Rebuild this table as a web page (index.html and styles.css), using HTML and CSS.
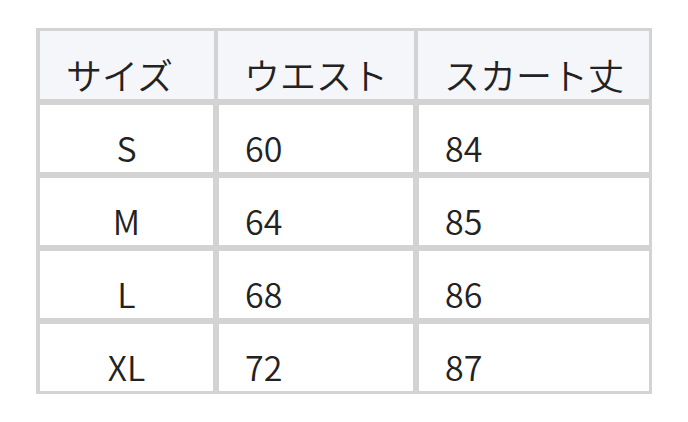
FILE: index.html
```html
<!DOCTYPE html>
<html lang="ja">
<head>
<meta charset="utf-8">
<link rel="stylesheet" href="styles.css">
</head>
<body>
<div class="table">
  <div class="th">サイズ</div>
  <div class="th">ウエスト</div>
  <div class="th">スカート丈</div>
  <div class="td center">S</div>
  <div class="td">60</div>
  <div class="td">84</div>
  <div class="td center">M</div>
  <div class="td">64</div>
  <div class="td">85</div>
  <div class="td center">L</div>
  <div class="td">68</div>
  <div class="td">86</div>
  <div class="td center">XL</div>
  <div class="td">72</div>
  <div class="td">87</div>
</div>
</body>
</html>
```
FILE: styles.css
```css
html, body {
  margin: 0;
  padding: 0;
  background: #ffffff;
}
body {
  padding: 28px 0 0 36px;
  font-family: "Noto Sans CJK JP", "Noto Sans", sans-serif;
  font-weight: 350;
  color: #222222;
}
.table {
  display: inline-grid;
  grid-template-columns: 173px 194px 230px;
  grid-template-rows: 68px 67px 67px 67px 67px;
  gap: 6px;
  padding: 3px 3px 3px 4px;
  background: #d3d3d3;
}
.th, .td {
  line-height: 40px;
  padding: 23px 26px 5px 26px;
  box-sizing: border-box;
  white-space: nowrap;
}
.th {
  background: #f5f6fa;
  font-size: 36px;
}
.td {
  background: #ffffff;
  font-size: 34px;
  padding-top: 23px;
  padding-bottom: 4px;
}
.th:nth-child(1) { margin-right: -1px; }
.th:nth-child(2) { margin-left: -1px; margin-right: -1px; }
.th:nth-child(3) { margin-left: -1px; }
.center {
  text-align: center;
  padding-left: 0;
  padding-right: 0;
}
```
